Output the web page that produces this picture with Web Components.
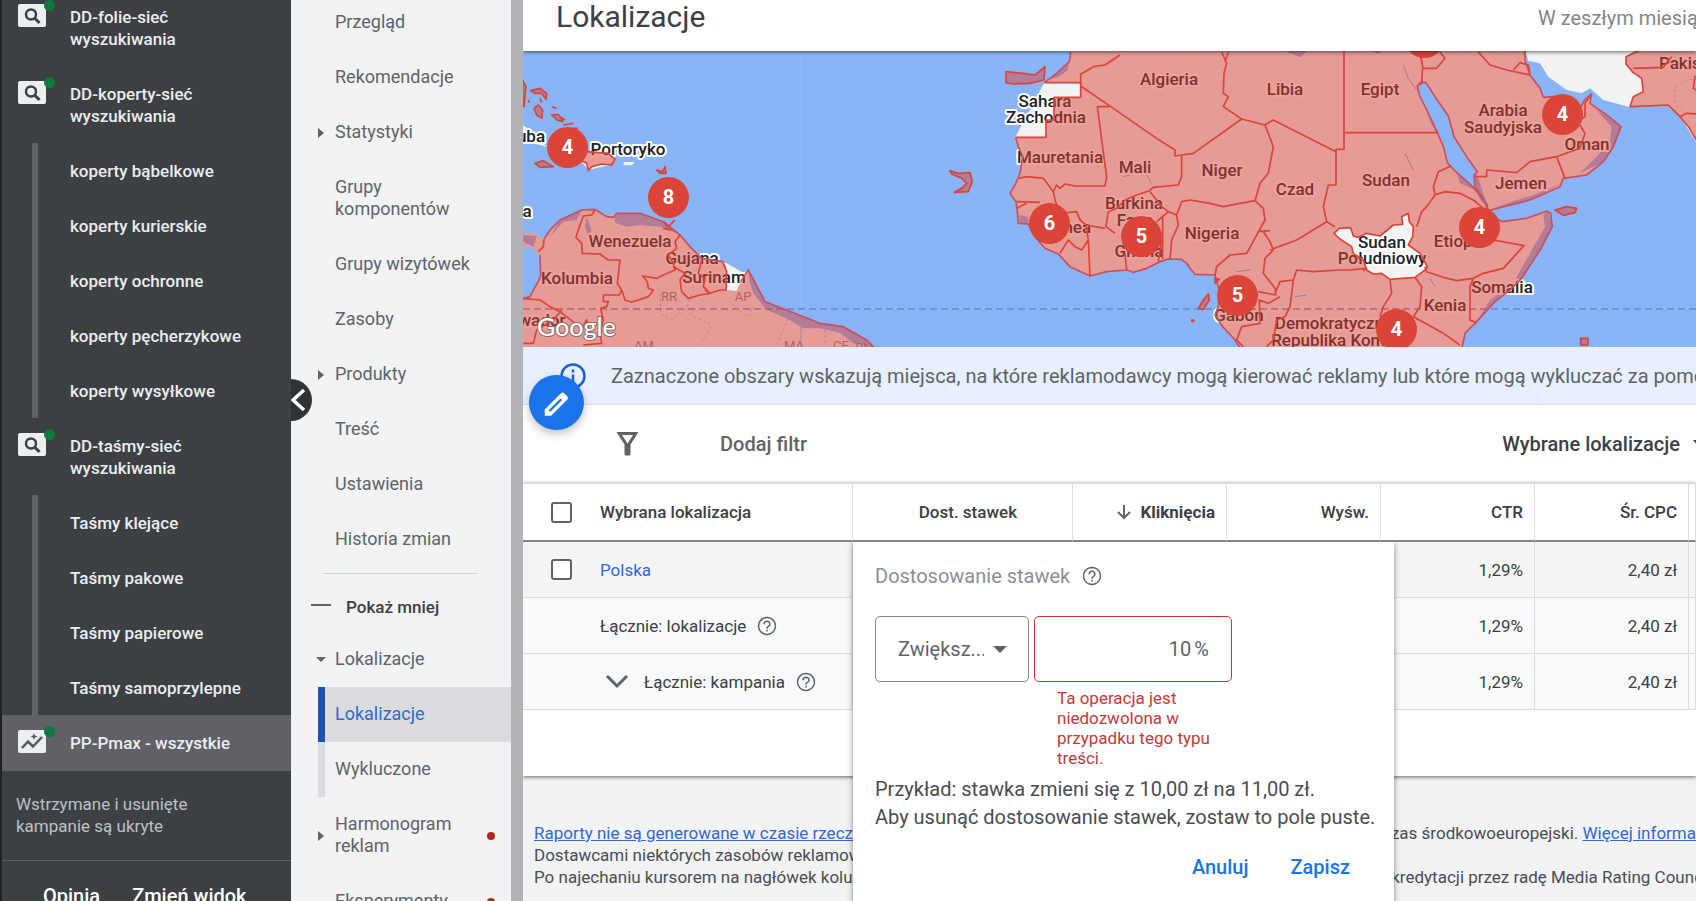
<!DOCTYPE html>
<html lang="pl">
<head>
<meta charset="utf-8">
<meta name="viewport" content="width=device-width, initial-scale=1">
<title>Lokalizacje</title>
<style>
  html, body { height: 100%; }
  body { margin: 0; overflow: hidden; font-family: Roboto, "Liberation Sans", sans-serif; font-size: 17px; line-height: 22px; color: #3c4043; background: #f1f3f4; }
</style>
</head>
<body>
<ads-app></ads-app>

<script>
const define = (name, html, setup) => customElements.define(name, class extends HTMLElement {
  connectedCallback() {
    if (this.shadowRoot) return;
    const t = document.createElement('template');
    t.innerHTML = html;
    this.attachShadow({ mode: 'open' }).append(t.content.cloneNode(true));
    if (setup) setup.call(this, this.shadowRoot);
  }
});

/* ---------- Campaign list ---------- */
define('campaign-item', `
<style>
  :host { display: block; }
  a { display: flex; align-items: flex-start; min-height: 55px; box-sizing: border-box; padding-left: 16px; color: #eceef0; text-decoration: none; font-weight: 500; }
  .icon { position: relative; width: 28px; height: 23px; margin-top: 15px; margin-right: 24px; flex: none; }
  .icon svg { display: block; }
  .icon::after { content: ""; position: absolute; right: -9px; top: -4px; width: 11px; height: 11px; border-radius: 50%; background: #13783f; }
  .bar { display: none; width: 6px; margin: 0 32px 0 14px; align-self: stretch; background: #5f6368; flex: none; }
  .text { max-width: 185px; padding: 17px 0 16px; }
  .pmax { display: none !important; }
  :host([sub]) .icon { display: none; }
  :host([sub]) .bar { display: block; }
  :host([selected]) a { background: #5f6166; min-height: 56px; }
  :host([selected]) .pmax { display: block !important; }
  :host([selected]) .search { display: none; }
</style>
<a href="#"><span class="icon">
  <svg class="search" width="28" height="23" viewBox="0 0 28 23"><rect width="28" height="23" rx="2" fill="#eceef0"/><circle cx="13" cy="10.500" r="5" fill="none" stroke="#3c4043" stroke-width="2.500"/><path d="M16.500 14l5 5" stroke="#3c4043" stroke-width="3"/></svg>
  <svg class="pmax" width="28" height="23" viewBox="0 0 28 23"><rect width="28" height="23" rx="2" fill="#eceef0"/><path d="M4 18l6-6.500 5 5L24 7" fill="none" stroke="#55585c" stroke-width="2.500"/><path d="M16 3l1 2.500 2.500 1-2.500 1-1 2.500-1-2.500-2.500-1 2.500-1z" fill="#55585c"/></svg>
</span><span class="bar"></span><span class="text"><slot></slot></span></a>`);

define('campaign-sidebar', `
<style>
  :host { display: block; width: 291px; box-sizing: border-box; flex: none; background: #3c4043; border-left: 2px solid #202124; overflow: hidden; }
  .list { margin-top: -11px; }
  p { margin: 0; padding: 22px 14px 23px; color: #bdc1c6; }
  footer { border-top: 1px solid #5f6368; display: flex; gap: 32px; padding: 23px 0 0 41px; }
  footer button { border: 0; padding: 0; background: none; color: #fff; font: 500 20px/24px Roboto, "Liberation Sans", sans-serif; white-space: nowrap; }
</style>
<nav class="list" aria-label="Kampanie">
  <campaign-item>DD-folie-sieć wyszukiwania</campaign-item>
  <campaign-item>DD-koperty-sieć wyszukiwania</campaign-item>
  <campaign-item sub>koperty bąbelkowe</campaign-item>
  <campaign-item sub>koperty kurierskie</campaign-item>
  <campaign-item sub>koperty ochronne</campaign-item>
  <campaign-item sub>koperty pęcherzykowe</campaign-item>
  <campaign-item sub>koperty wysyłkowe</campaign-item>
  <campaign-item>DD-taśmy-sieć wyszukiwania</campaign-item>
  <campaign-item sub>Taśmy klejące</campaign-item>
  <campaign-item sub>Taśmy pakowe</campaign-item>
  <campaign-item sub>Taśmy papierowe</campaign-item>
  <campaign-item sub>Taśmy samoprzylepne</campaign-item>
  <campaign-item selected>PP-Pmax - wszystkie</campaign-item>
</nav>
<p>Wstrzymane i usunięte<br>kampanie są ukryte</p>
<footer><button type="button">Opinia</button><button type="button">Zmień widok</button></footer>`);

/* ---------- Section menu ---------- */
define('nav-item', `
<style>
  :host { display: block; font-size: 18px; }
  a { display: grid; grid-template-columns: 7px 1fr 30px; column-gap: 10px; align-items: stretch; margin-left: 27px; color: #5f6368; text-decoration: none; }
  .lead { display: flex; align-items: center; }
  .lead svg { display: none; }
  .text { padding: 16px 0 17px; max-width: 145px; }
  .mark { align-self: center; width: 8px; height: 8px; border-radius: 50%; display: none; background: #b3261e; margin-left: 6px; }
  :host([closed]) .right, :host([open]) .down, :host([marked]) .mark { display: block; }
  :host([open]) svg { margin-left: -2px; flex: none; }
  :host([sub]) .lead, :host([selected]) .lead { background: #dadce0; }
  :host([selected]) a { background: #dadce0; color: #3367c8; }
  :host([selected]) .lead { background: #1a53b0; }
</style>
<a href="#"><span class="lead"><svg class="right" width="6" height="10" viewBox="0 0 6 10"><path d="M0 0l6 5-6 5z" fill="#5f6368"/></svg><svg class="down" width="10" height="6" viewBox="0 0 10 6"><path d="M0 0h10L5 5z" fill="#5f6368"/></svg></span><span class="text"><slot></slot></span><span class="mark"></span></a>`);

define('section-nav', `
<style>
  :host { display: block; position: relative; width: 220px; flex: none; background: #f1f3f4; overflow: hidden; }
  .list { margin-top: -5px; }
  hr { border: 0; height: 1px; background: #d0d3d7; margin: 6px 33px 0 32px; }
  .less { display: flex; align-items: center; gap: 15px; width: 100%; height: 58px; padding: 7px 0 0 20px; box-sizing: border-box; border: 0; background: none; color: #3c4043; font: 500 17px/22px Roboto, "Liberation Sans", sans-serif; }
  .collapse { position: absolute; left: -21px; top: 379px; width: 42px; height: 42px; padding: 0; border: 0; border-radius: 50%; background: #303235; }
  .collapse svg { display: block; margin-left: 21px; }
</style>
<nav class="list" aria-label="Sekcje">
  <nav-item>Przegląd</nav-item>
  <nav-item>Rekomendacje</nav-item>
  <nav-item closed>Statystyki</nav-item>
  <nav-item>Grupy komponentów</nav-item>
  <nav-item>Grupy wizytówek</nav-item>
  <nav-item>Zasoby</nav-item>
  <nav-item closed>Produkty</nav-item>
  <nav-item>Treść</nav-item>
  <nav-item>Ustawienia</nav-item>
  <nav-item>Historia zmian</nav-item>
  <hr>
  <button class="less" type="button"><svg width="20" height="8" viewBox="0 0 20 8"><path d="M0 2h20" stroke="#5f6368" stroke-width="2"/></svg>Pokaż mniej</button>
  <nav-item open>Lokalizacje</nav-item>
  <nav-item selected>Lokalizacje</nav-item>
  <nav-item sub>Wykluczone</nav-item>
  <nav-item closed marked>Harmonogram reklam</nav-item>
  <nav-item marked>Eksperymenty</nav-item>
</nav>
<button class="collapse" type="button" aria-label="Zwiń"><svg width="16" height="24" viewBox="0 0 16 24"><path d="M13 2L2 12l11 10" fill="none" stroke="#fff" stroke-width="3.500"/></svg></button>`);

/* ---------- Header ---------- */
define('page-header', `
<style>
  :host { display: flex; position: relative; z-index: 1; justify-content: space-between; height: 51px; flex: none; background: #fff; box-shadow: 0 1px 4px rgba(0,0,0,.6); padding-left: 33px; white-space: nowrap; }
  h1 { margin: 0; font-size: 30px; line-height: 34px; font-weight: 400; color: #3c4043; }
  .range { width: 158px; overflow: hidden; font-size: 20px; line-height: 36px; color: #80868b; }
</style>
<h1>Lokalizacje</h1><div class="range">W zeszłym miesiącu</div>`);

/* ---------- Map ---------- */
const land4 = 'M272 30L268 65 230 100 193 128';
const coastW = 'L115 320 128 350 120 400 105 435 90 460 108 485 112 515 115 550 145 552 165 590 195 625 235 642 270 680 330 708 380 695 440 690 460 697 500 685 540 665 565 657 605 658 620 670 630 685 645 703 705 705 710 725 718 750 715 800 705 825 728 860 765 900 785 930';
const redSea = '1515 485 1478 440 1422 390 1402 368 1390 320 1373 280 1345 220 1318 165 1312 138 1322 127 1338 128 1368 175 1405 228 1422 290 1460 350 1492 395 1482 405 1485 440 1520 492';
const coastE = 'L1445 930 1455 880 1490 845 1545 785 1590 750 1625 715 1680 630 1717 560 1712 520 1700 514 1640 535 1565 545 1525 520 ' + redSea + ' 1525 512 1580 498 1650 480 1740 440 1750 415 1820 405 1870 365 1900 320 1923 260 1880 225 1830 190 1835 162 1815 178 1800 205 1770 210 1720 170 1690 172 1680 145 1650 105 1635 60 1635 30';
const sudan = 'M1062 580L1078 565 1112 563 1120 588 1135 592 1160 580 1200 588 1240 555 1268 553 1265 530 1285 520 1288 545 1300 560 1298 590 1285 615 1320 640 1342 680 1335 690 1305 712 1230 718 1205 700 1180 702 1160 690 1150 660 1120 640 1115 620 1080 597Z';
define('map-pin', `
<style>
  :host { position: absolute; width: 41px; height: 41px; margin: -20px 0 0 -20px; border-radius: 50%; background: #db4437; color: #fff; font-weight: 700; font-size: 20px; line-height: 41px; text-align: center; }
</style><slot></slot>`);

define('location-map', `
<style>
  :host { display: block; position: relative; height: 296px; flex: none; overflow: hidden; background: #8ab4f8; }
  svg { display: block; width: 1200px; height: 296px; }
  .l { font: 500 17px Roboto, "Liberation Sans", sans-serif; fill: #202124; stroke: #fff; stroke-width: 4px; stroke-linejoin: round; paint-order: stroke; text-anchor: middle; }
  .s { font: 400 13px Roboto, "Liberation Sans", sans-serif; fill: #80868b; text-anchor: middle; }
  .o { fill: #db4437; fill-opacity: .5; stroke: #db4437; stroke-width: 5; stroke-linejoin: round; }
  .b { fill: none; stroke: #db4437; stroke-width: 5; stroke-linejoin: round; }
  .w { fill: #f1f3f4; } .a { fill: #8ab4f8; }
  .c { fill: none; stroke: #c9505c; stroke-width: 5; stroke-linejoin: round; }
  .d { fill: none; stroke: #a06a74; stroke-width: 3; stroke-dasharray: 8 8; opacity: .7; }
  .g { font: 500 25px Lato, Roboto, sans-serif; fill: #fff; stroke: #8a6a6a; stroke-width: 2px; paint-order: stroke; }
</style>
<svg viewBox="0 0 1200 296" role="img" aria-label="Mapa">
  <!-- base land -->
  <g transform="translate(457 -11) scale(.33333)">
    <path class="w" d="${land4}L178 155 165 185 135 235 107 290${coastW}${coastE}Z"/>
    <path class="w" d="M1635 30L1645 62 1680 70 1705 110 1760 150 1805 160 1830 145 1870 180 1945 200 2065 195 2100 230 2148 305 2200 310 2200 30Z"/>
    <path class="a" d="M910 30L960 52 985 30ZM1165 30L1195 42 1210 30ZM268 65L262 92 232 112 205 120 193 128 230 95ZM1655 100L1690 150 1680 120ZM1340 220L1373 280 1355 255ZM1425 385L1510 475 1485 450 1440 430ZM1490 400L1525 505 1500 480 1484 430 1480 405ZM1845 205L1923 260 1900 320 1870 365 1800 400 1850 350 1890 300 1895 260ZM1717 560L1670 650 1625 715 1590 750 1545 785 1490 845 1530 780 1600 730 1650 640 1695 560 1690 525 1705 514ZM118 525L145 530 145 552 118 550ZM1525 512L1580 490 1660 465 1740 432 1650 480Z"/>
  </g>
  <g transform="translate(-3 -51) scale(.33333)">
    <path class="w" d="M0 700L40 698 72 720 90 690 120 660 185 630 225 628 260 650 290 640 360 640 430 665 480 705 510 740 545 775 620 790 670 818 685 810 735 905 800 930 900 970 970 980 1040 1020 1070 1050H0V900L30 890 62 830 60 770 35 740 0 740ZM0 370L40 395 80 440 0 420ZM312 486H345L335 496H310Z"/>
    <path class="w" d="M200 455L260 460 288 480 270 495 205 510 180 480Z"/>
    <path class="a" d="M285 642L360 640 430 665 470 700 420 680 360 675 320 680 285 668ZM685 815L735 905 800 930 900 970 970 980 1040 1020 1060 1042 1000 1030 960 998 900 985 850 985 800 955 740 930 700 880 690 850ZM200 650L215 690 205 710 195 680ZM120 660L185 632 170 660 130 665 90 710ZM10 705L50 708 40 740 10 725Z"/>
  </g>
  <path d="M278 0V296" fill="none" stroke="#92b9f8"/>
  <path d="M0 258H1200" stroke="#667fba" stroke-width="2" stroke-dasharray="7 4" opacity=".65"/>
  <!-- labels -->
  <g class="l">
    <text x="8" y="91">uba</text><text x="105" y="104">Portoryko</text><text x="4" y="166">a</text>
    <text x="107" y="196">Wenezuela</text><text x="169" y="213">Gujana</text><text x="191" y="232">Surinam</text><text x="54" y="233">Kolumbia</text><text x="19" y="275">wador</text>
    <text x="646" y="34">Algieria</text><text x="762" y="44">Libia</text><text x="522" y="56">Sahara</text><text x="523" y="72">Zachodnia</text>
    <text x="537" y="112">Mauretania</text><text x="612" y="122">Mali</text><text x="699" y="125">Niger</text><text x="772" y="144">Czad</text>
    <text x="611" y="158">Burkina</text><text x="612" y="175">Faso</text><text x="540" y="182">Gwinea</text><text x="616" y="206">Ghana</text><text x="689" y="188">Nigeria</text>
    <text x="716" y="270">Gabon</text><text x="811" y="278">Demokratyczna</text><text x="812" y="295">Republika Konga</text>
    <text x="857" y="44">Egipt</text><text x="863" y="135">Sudan</text><text x="859" y="197">Sudan</text><text x="859" y="213">Południowy</text>
    <text x="980" y="65">Arabia</text><text x="980" y="82">Saudyjska</text><text x="1064" y="99">Oman</text><text x="998" y="138">Jemen</text><text x="937" y="196">Etiopia</text>
    <text x="979" y="242">Somalia</text><text x="922" y="260">Kenia</text><text x="1169" y="18">Pakistan</text>
  </g>
  <g class="s"><text x="146" y="250">RR</text><text x="220" y="250">AP</text><text x="121" y="299">AM</text><text x="271" y="299">MA</text><text x="318" y="299">CE</text><text x="341" y="301">RN</text></g>
  <!-- targeted areas -->
  <g transform="translate(-3 -51) scale(.33333)">
    <path class="o" stroke="none" style="stroke:none" d="M0 700L40 698 72 720 90 690 120 660 185 630 225 628 260 650 290 640 360 640 430 665 480 705 510 740 545 775 605 785 618 800 618 870 650 873 662 845 685 810 735 905 800 930 900 970 970 980 1040 1020 1070 1050H0V900L30 890 62 830 60 770 35 740 0 740Z"/>
    <path class="c" d="M72 718L90 690 120 660 185 630 225 628 260 650 282 652 290 640 360 640 430 665 480 705 510 740 545 775 610 785M662 845L685 810 735 905 800 930 900 970 970 980 1040 1020 1070 1050M0 900L30 890 62 830 60 765"/>
    <path class="b" d="M225 630L215 645 190 648 175 690 168 712 185 730 187 760 240 762 265 780 300 780 292 850 305 870 315 900 335 907 385 890 400 870 385 865 382 845 368 828 410 835 430 825 465 810 460 790 445 765 470 745 465 725 480 705M430 665L445 680 465 660M430 685L455 690M460 800L495 820 480 840 485 875 505 895 540 885 570 880 550 860 555 835 535 820 545 780M555 870L570 880 600 870 618 870 620 815 608 785M305 870L298 885H250V905H265L260 920 242 925 250 960 240 1000 245 1030 190 1035M10 895L60 900 90 920 120 935 165 970 185 985 200 960 210 1010M10 1030H40L50 990 100 960 125 930M72 718L70 740 55 755"/>
    <path class="d" d="M420 880L422 940 450 960 500 925 520 870M500 925L520 950 575 975 540 1035M620 900L680 950 700 920M805 955L770 1035M915 990V1040" style="stroke-width:2"/>
    <g class="o"><path d="M8 240L18 260 12 320 8 310ZM32 272L60 265 80 280 78 298 65 280 45 280ZM42 325L55 315 68 330 65 355 50 345ZM60 295l5 12M95 320l15 5M95 345l20-2 14 22-18 -5ZM120 350l15 10M130 375l30-5M155 385l20 0M25 300l3 8M45 490L70 482 100 500 60 502ZM200 455L265 460 285 478 275 495 245 492 215 500 205 512 200 490 180 480ZM410 510L420 520 438 520 435 500 428 515ZM1290 512L1315 520 1350 518 1357 545 1345 575 1303 577 1325 565 1340 550 1325 535 1295 522Z"/></g>
  </g>
  <g transform="translate(457 -11) scale(.33333)">
    <path class="o" style="stroke:none" fill-rule="evenodd" d="${land4}H302V172H222V240H198V292H107${coastW}${coastE}Z${sudan}"/>
    <path class="o" d="M1938 50L1980 30H2200V300L2152 305 2125 260 2100 230 2065 195 1950 200 1960 170 1990 155 1985 115 1960 98 1938 72Z"/>
    <path class="c" d="M272 36L268 65 230 100 193 128M107 292${coastW}M1445 930${coastE.replace('L1445 930', '')}"/>
    <path class="b" d="M193 128H302V172H222V240H198V292H107M302 128V103L340 80 375 75 420 45M302 138L388 197 530 295 585 330V348L640 340 785 237 730 200 745 170 730 160 732 100 740 70 725 36M745 36L735 65M302 138V170M388 200H352L380 412 375 438H285L255 432 240 445 230 435 220 455 190 415 140 410 118 415M605 348V410L595 435 520 442 508 452 470 465 435 480 410 505 385 515 378 560 405 580M785 237L855 255 880 240 1068 335M855 255L880 320 865 400 840 430 825 482 780 490 730 500 690 490 630 480 605 485 590 525 565 515 545 500 530 480 510 455M590 525L595 555 575 600 570 657M548 530V657M565 515L530 545M825 482L850 505 855 540 835 575 870 572M855 540L800 640 750 645 710 680 705 705M850 575L870 605 880 630 855 655 850 700 885 745 888 765 835 755M870 630L950 600 1040 545 1065 560M1040 545L1030 500 1045 435H1068V328H1092V36M1095 278H1110M1095 278H1375M220 455L225 480 240 520 290 515 300 540 318 555 325 600 330 708M318 555L375 565M240 640L265 600 285 620 305 630 325 600M440 690L435 640M535 665L545 600M110 485L180 487M110 505L140 490M885 760L900 725 940 720 930 800 915 830 890 840 880 900 860 920M940 720L950 690 1000 695 1080 690 1110 690 1160 685 1150 692M790 920L770 900 785 860 840 850 838 780 865 790 900 770M1320 135L1325 130 1328 80 1320 36M1328 85L1370 85 1395 55 1380 36M1495 36L1530 75 1580 90 1650 105M1600 90L1620 68 1645 75 1650 100M1412 378L1375 395 1360 440 1365 465 1340 500 1325 515 1310 560M1365 465L1395 455 1440 460 1480 480 1510 505M1540 600L1632 617 1570 685 1510 700 1480 715 1430 722 1390 712 1340 695 1335 680M1480 715L1470 740V840L1490 848M1305 712L1325 740 1320 800 1300 830 1390 880 1440 915M1230 720L1235 760 1210 800 1200 830M1485 410H1520V390L1610 398 1650 365 1730 350 1800 325 1815 280 1800 255M1730 350L1755 415M1835 162L1815 190 1815 230 1800 240M1960 85L2050 82 2075 50M2200 95L2145 110 2140 145 2200 180M2100 230L2120 220 2200 225"/>
    <path class="b" d="${sudan}"/>
    <path class="o" d="M78 95L130 100 165 105 195 80 192 120 150 130 100 132 78 128ZM685 762L688 780 670 808 655 805 670 780ZM705 715L718 718 705 730ZM1725 510L1760 500 1790 505 1785 518 1750 526ZM1802 895l22 0v20h-22ZM635 840h6v4h-6Z"/>
    <path class="d" d="M2200 110L2120 120 2085 145 2085 190 2110 215" style="stroke-width:2"/>
    <path d="M1270 75L1285 115 1310 150M1275 340L1300 390M1350 715L1365 740M430 410L450 405M500 405L515 430M770 695L810 690M945 770L980 765" fill="none" stroke="#a5778f" stroke-width="3"/>
  </g>
  <text class="g" x="14" y="285">Google</text>
</svg>
<map-pin style="left:44px;top:96px">4</map-pin>
<map-pin style="left:145px;top:146px">8</map-pin>
<map-pin style="left:526px;top:172px">6</map-pin>
<map-pin style="left:618px;top:185px">5</map-pin>
<map-pin style="left:714px;top:244px">5</map-pin>
<map-pin style="left:873px;top:278px">4</map-pin>
<map-pin style="left:956px;top:176px">4</map-pin>
<map-pin style="left:1039px;top:63px">4</map-pin>
<map-pin style="left:901px;top:-14px"></map-pin>`);

/* ---------- Banner, filter ---------- */
define('info-banner', `
<style>
  :host { display: flex; align-items: center; gap: 25px; height: 58px; box-sizing: border-box; flex: none; padding-left: 37px; background: #e8f0fe; border-bottom: 1px solid #dadce0; font-size: 20px; line-height: 24px; color: #5f6368; white-space: nowrap; overflow: hidden; }
  svg { flex: none; }
</style>
<svg width="26" height="26" viewBox="0 0 26 26"><circle cx="13" cy="13" r="11.500" fill="none" stroke="#1a5fd0" stroke-width="2.500"/><path d="M13 11.500v8M13 6.500v3" stroke="#1a5fd0" stroke-width="2.500"/></svg>
<span>Zaznaczone obszary wskazują miejsca, na które reklamodawcy mogą kierować reklamy lub które mogą wykluczać za pomocą</span>`);

define('edit-fab', `
<style>
  :host { position: absolute; left: 6px; top: 375px; z-index: 2; }
  button { display: flex; align-items: center; justify-content: center; width: 55px; height: 55px; padding: 0; border: 0; border-radius: 50%; background: #1a73e8; box-shadow: 0 4px 8px rgba(60,64,67,.3); }
</style>
<button type="button" aria-label="Edytuj"><svg width="32" height="32" viewBox="0 0 30 30"><path d="M3.500 21L18.500 6a2.500 2.500 0 0 1 3.500 0l2.500 2.500a2.500 2.500 0 0 1 0 3.500L9.500 27h-6z" fill="#fff"/><path d="M8 22.500L19 11.500" stroke="#1a73e8" stroke-width="2.200"/></svg></button>`);

define('filter-bar', `
<style>
  :host { display: flex; align-items: center; height: 78px; flex: none; background: #fff; padding-left: 92px; overflow: hidden; }
  button { border: 0; padding: 0; background: none; font: 500 20px/24px Roboto, "Liberation Sans", sans-serif; color: #5f6368; white-space: nowrap; }
  .icon { width: 25px; height: 26px; }
  .add { margin-left: 80px; }
  .view { display: flex; align-items: center; gap: 13px; margin-left: auto; margin-right: -11px; color: #3c4043; }
</style>
<button class="icon" type="button" aria-label="Filtr"><svg width="25" height="26" viewBox="0 0 25 26"><path d="M1.500 1h22l-8 12.500V23a1.500 1.500 0 0 1-1.500 1.500h-3A1.500 1.500 0 0 1 9.500 23V13.500zM7 4l5.500 8.500L18 4z" fill="#5f6368" fill-rule="evenodd"/></svg></button>
<button class="add" type="button">Dodaj filtr</button>
<button class="view" type="button">Wybrane lokalizacje<svg width="14" height="8" viewBox="0 0 14 8"><path d="M0 0h14L7 8z" fill="#3c4043"/></svg></button>`);

define('help-icon', `
<style>:host { display: inline-flex; flex: none; } button { display: block; padding: 0; border: 0; background: none; } svg { display: block; }</style>
<button type="button" aria-label="Pomoc"><svg width="22" height="22" viewBox="0 0 24 24" fill="#5f6368"><path d="M11.200 18h1.600v-2h-1.600v2zM12 2C6.480 2 2 6.480 2 12s4.480 10 10 10 10-4.480 10-10S17.520 2 12 2zm0 18.400c-4.640 0-8.400-3.760-8.400-8.400S7.360 3.600 12 3.600s8.400 3.760 8.400 8.400-3.760 8.400-8.400 8.400zM12 6c-2.210 0-4 1.790-4 4h1.700c0-1.300 1-2.300 2.300-2.300s2.300 1 2.300 2.300c0 2-3.100 1.750-3.100 5h1.600c0-2.250 3.200-2.500 3.200-5 0-2.210-1.790-4-4-4z"/></svg></button>`);

/* ---------- Table ---------- */
const cells = (a, b) => `<td></td><td></td><td></td><td>${a}</td><td>${b}</td><td></td>`;
define('locations-table', `
<style>
  :host { display: block; background: #fff; padding-bottom: 66px; box-shadow: 0 1px 4px rgba(0,0,0,.6); flex: none; }
  table { width: 100%; table-layout: fixed; border-collapse: separate; border-spacing: 0; color: #3c4043; }
  th, td { box-sizing: border-box; height: 56px; padding: 0 11px 0 0; text-align: right; border-right: 1px solid #dadce0; border-bottom: 1px solid #dadce0; font-weight: 400; white-space: nowrap; overflow: hidden; }
  th { height: 59px; border-top: 1px solid #dadce0; border-bottom: 2px solid #80838a; font-weight: 500; }
  .pick { border-right: 0; padding: 0 0 0 28px; text-align: left; }
  .name { text-align: left; }
  thead .bid { padding-right: 55px; }
  thead .sorted { font-weight: 700; }
  .sorted svg { margin-right: 8px; vertical-align: -2px; }
  tbody tr { background: #f8f9fb; }
  tbody tr:first-child { background: #f5f5f5; }
  input { display: block; appearance: none; width: 21px; height: 21px; margin: 0; border: 2px solid #5f6368; border-radius: 3px; background: #fff; }
  a { color: #3367d6; text-decoration: none; }
  .row { display: flex; align-items: center; gap: 10px; }
  .row button { padding: 0; border: 0; background: none; margin: 0 5px 0 5px; line-height: 0; }
  col.c1 { width: 77px; } col.c2 { width: 253px; } col.c3 { width: 220px; } col.c4 { width: 154px; }
</style>
<table>
  <colgroup><col class="c1"><col class="c2"><col class="c3"><col class="c4"><col class="c4"><col class="c4"><col class="c4"><col></colgroup>
  <thead><tr><th class="pick"><input type="checkbox" aria-label="Zaznacz wszystkie"></th><th class="name">Wybrana lokalizacja</th><th class="bid">Dost. stawek</th><th class="sorted"><svg width="16" height="16" viewBox="0 0 16 16"><path d="M8 1v13M2 8l6 6 6-6" fill="none" stroke="#5f6368" stroke-width="2"/></svg>Kliknięcia</th><th>Wyśw.</th><th>CTR</th><th>Śr. CPC</th><th></th></tr></thead>
  <tbody>
    <tr><td class="pick"><input type="checkbox" aria-label="Polska"></td><td class="name"><a href="#">Polska</a></td>${cells('1,29%', '2,40 zł')}</tr>
    <tr><td class="pick"></td><td class="name"><div class="row">Łącznie: lokalizacje<help-icon></help-icon></div></td>${cells('1,29%', '2,40 zł')}</tr>
    <tr><td class="pick"></td><td class="name"><div class="row"><button type="button" aria-label="Rozwiń"><svg width="24" height="16" viewBox="0 0 24 16"><path d="M2 2l10 10L22 2" fill="none" stroke="#5f6368" stroke-width="3"/></svg></button>Łącznie: kampania<help-icon></help-icon></div></td>${cells('1,29%', '2,40 zł')}</tr>
  </tbody>
</table>`);

/* ---------- Bid adjustment dialog ---------- */
define('bid-dialog', `
<style>
  :host { display: block; position: absolute; left: 330px; top: 542px; width: 541px; height: 400px; box-sizing: border-box; z-index: 3; padding: 22px; background: #fff; box-shadow: 0 2px 6px rgba(0,0,0,.45); clip-path: inset(0 -10px -10px -10px); color: #5f6368; font-size: 20px; line-height: 24px; }
  h2 { display: flex; align-items: center; gap: 11px; margin: 0 0 28px; color: #8b8f94; font-size: 20px; line-height: 24px; font-weight: 400; }
  .fields { display: grid; grid-template-columns: 154px 198px; column-gap: 5px; }
  .box { display: flex; align-items: center; box-sizing: border-box; height: 66px; border: 1px solid #80868b; border-radius: 5px; position: relative; }
  select { appearance: none; width: 100%; height: 100%; padding: 0 44px 0 22px; border: 0; background: none; color: #5f6368; font: 400 20px/24px Roboto, "Liberation Sans", sans-serif; }
  .box svg { position: absolute; right: 21px; pointer-events: none; }
  .bad { border-color: #c5393a; padding-right: 22px; gap: 3px; }
  input { flex: 1; min-width: 0; padding: 0; border: 0; background: none; text-align: right; color: #5f6368; font: 400 20px/24px Roboto, "Liberation Sans", sans-serif; }
  .error { grid-column: 2; width: 160px; margin: 6px 0 0 23px; color: #c5393a; font-size: 17px; line-height: 20px; }
  .note { margin: 7px 0 0; line-height: 28px; color: #4a4d51; white-space: nowrap; }
  .actions { display: flex; justify-content: flex-end; gap: 42px; margin-top: 24px; padding-right: 22px; }
  .actions button { border: 0; padding: 0; background: none; color: #1a73e8; font: 500 20px/24px Roboto, "Liberation Sans", sans-serif; }
</style>
<h2>Dostosowanie stawek<help-icon></help-icon></h2>
<div class="fields">
  <div class="box"><select aria-label="Kierunek"><option>Zwiększ...</option></select><svg width="14" height="7" viewBox="0 0 14 7"><path d="M0 0h14L7 7z" fill="#5f6368"/></svg></div>
  <div class="box bad"><input type="text" value="10" aria-label="Procent" aria-describedby="err"><span>%</span></div>
  <div class="error" id="err">Ta operacja jest niedozwolona w przypadku tego typu treści.</div>
</div>
<p class="note">Przykład: stawka zmieni się z 10,00 zł na 11,00 zł.<br>Aby usunąć dostosowanie stawek, zostaw to pole puste.</p>
<div class="actions"><button type="button">Anuluj</button><button type="button">Zapisz</button></div>`);

define('page-footer', `
<style>
  :host { display: block; padding: 46px 0 0 11px; white-space: nowrap; color: #4a4d51; }
  div { display: grid; grid-template-columns: 848px 1fr; overflow: hidden; }
  span { overflow: hidden; }
  a { color: #3367d6; }
</style>
<div><span><a href="#">Raporty nie są generowane w czasie rzeczywistym.</a></span><span>czas środkowoeuropejski. <a href="#">Więcej informacji</a></span></div>
<div><span>Dostawcami niektórych zasobów reklamowych</span></div>
<div><span>Po najechaniu kursorem na nagłówek kolumny</span><span>akredytacji przez radę Media Rating Council</span></div>`);

define('ads-app', `
<style>
  :host { display: flex; height: 100vh; overflow: hidden; }
  .gutter { width: 12px; flex: none; background: #b1b3b6; }
  main { position: relative; display: flex; flex-direction: column; flex: 1; min-width: 0; overflow: hidden; }
</style>
<campaign-sidebar></campaign-sidebar>
<section-nav></section-nav>
<div class="gutter"></div>
<main>
  <page-header></page-header>
  <location-map></location-map>
  <info-banner></info-banner>
  <filter-bar></filter-bar>
  <locations-table></locations-table>
  <page-footer></page-footer>
  <edit-fab></edit-fab>
  <bid-dialog></bid-dialog>
</main>`);
</script>
</body>
</html>
